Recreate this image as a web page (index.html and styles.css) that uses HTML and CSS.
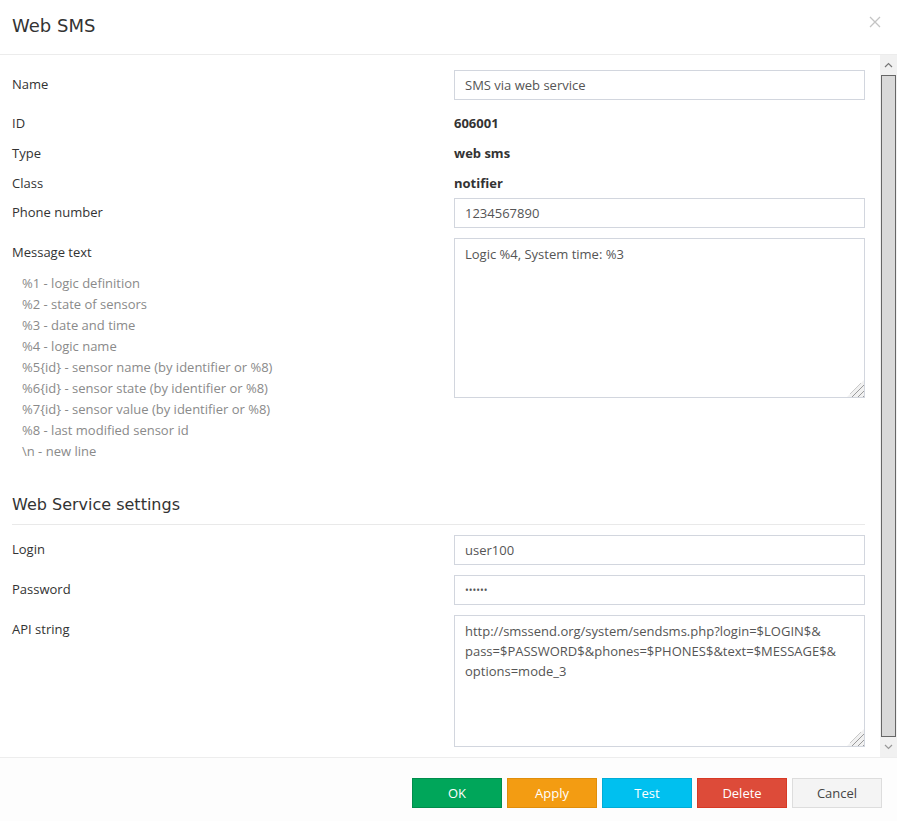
FILE: index.html
```html
<!DOCTYPE html>
<html lang="en">
<head>
  <meta charset="UTF-8">
  <meta name="viewport" content="width=device-width, initial-scale=1.0">
  <title>Web SMS</title>
  <link rel="stylesheet" href="styles.css">
</head>
<body>
  <div class="modal">
    <div class="modal-header">
      <h4 class="modal-title">Web SMS</h4>
      <button class="close" type="button" aria-label="Close">
        <svg width="12" height="12" viewBox="0 0 12 12"><path d="M1 1L11 11M11 1L1 11" stroke="#c4c4c4" stroke-width="1.3"/></svg>
      </button>
    </div>

    <div class="modal-body">
      <div class="body-content">
        <form class="form">
          <div class="form-row">
            <label class="label" for="name">Name</label>
            <input class="input" id="name" type="text" value="SMS via web service">
          </div>
          <div class="form-row static">
            <span class="label">ID</span>
            <span class="value">606001</span>
          </div>
          <div class="form-row static">
            <span class="label">Type</span>
            <span class="value">web sms</span>
          </div>
          <div class="form-row static last">
            <span class="label">Class</span>
            <span class="value">notifier</span>
          </div>
          <div class="form-row">
            <label class="label" for="phone">Phone number</label>
            <input class="input" id="phone" type="text" value="1234567890">
          </div>
          <div class="form-row">
            <div>
              <label class="label" for="message">Message text</label>
              <ul class="hints">
                <li>%1 - logic definition</li>
                <li>%2 - state of sensors</li>
                <li>%3 - date and time</li>
                <li>%4 - logic name</li>
                <li>%5{id} - sensor name (by identifier or %8)</li>
                <li>%6{id} - sensor state (by identifier or %8)</li>
                <li>%7{id} - sensor value (by identifier or %8)</li>
                <li>%8 - last modified sensor id</li>
                <li>\n - new line</li>
              </ul>
            </div>
            <div class="textarea-wrap">
              <textarea class="input textarea" id="message">Logic %4, System time: %3</textarea>
            </div>
          </div>

          <h4 class="section-title">Web Service settings</h4>

          <div class="form-row">
            <label class="label" for="login">Login</label>
            <input class="input" id="login" type="text" value="user100">
          </div>
          <div class="form-row">
            <label class="label" for="password">Password</label>
            <input class="input password" id="password" type="password" value="secret">
          </div>
          <div class="form-row">
            <label class="label" for="api">API string</label>
            <div class="textarea-wrap">
              <textarea class="input textarea api" id="api">http://smssend.org/system/sendsms.php?login=$LOGIN$&amp;
pass=$PASSWORD$&amp;phones=$PHONES$&amp;text=$MESSAGE$&amp;
options=mode_3</textarea>
            </div>
          </div>
        </form>
      </div>

      
      <div class="scrollbar">
        <div class="scroll-btn">
          <svg width="9" height="6" viewBox="0 0 9 6"><path d="M1 5L4.5 1.5L8 5" fill="none" stroke="#777" stroke-width="1.2"/></svg>
        </div>
        <div class="scroll-track">
          <div class="scroll-thumb"></div>
        </div>
        <div class="scroll-btn">
          <svg width="9" height="6" viewBox="0 0 9 6"><path d="M1 1L4.5 4.5L8 1" fill="none" stroke="#999" stroke-width="1.2"/></svg>
        </div>
      </div>
    </div>

    <div class="modal-footer">
      <button class="btn btn-ok" type="button">OK</button>
      <button class="btn btn-apply" type="button">Apply</button>
      <button class="btn btn-test" type="button">Test</button>
      <button class="btn btn-delete" type="button">Delete</button>
      <button class="btn btn-cancel" type="button">Cancel</button>
    </div>
  </div>
</body>
</html>
```

FILE: styles.css
```css
html, body {
  margin: 0;
  padding: 0;
  background: #fff;
}
body {
  font-family: "Open Sans", "Noto Sans", Arial, sans-serif;
  font-size: 13px;
  color: #333;
}
.modal {
  display: flex;
  flex-direction: column;
  width: 897px;
  height: 821px;
  overflow: hidden;
}
.modal-header {
  display: flex;
  align-items: center;
  justify-content: space-between;
  height: 54px;
  padding: 0 16px 0 12px;
  border-bottom: 1px solid #ececec;
  flex-shrink: 0;
}
.modal-title {
  margin: 0;
  font-family: "DejaVu Sans", sans-serif;
  font-size: 18px;
  font-weight: normal;
  color: #333;
  padding-bottom: 4px;
}
.close {
  background: none;
  border: none;
  padding: 0;
  margin-bottom: 11px;
  cursor: pointer;
  display: flex;
}
.modal-body {
  display: flex;
  height: 702px;
  flex-shrink: 0;
}
.body-content {
  flex: 1;
  overflow: hidden;
  padding: 15px 15px 0 12px;
}
.form-row {
  display: grid;
  grid-template-columns: 442px 1fr;
  align-items: start;
  margin-bottom: 10px;
}
.form-row.static {
  padding-top: 3px;
  margin-bottom: 7px;
  line-height: 20px;
}
.form-row.static.last {
  margin-bottom: 5px;
}
.label {
  display: block;
  line-height: 20px;
  padding-top: 4px;
}
.static .label {
  padding-top: 0;
}
.value {
  font-weight: bold;
}
.input {
  box-sizing: border-box;
  display: block;
  height: 30px;
  width: 100%;
  margin: 0;
  padding: 0 10px;
  border: 1px solid #d2d6de;
  border-radius: 0;
  font-family: inherit;
  font-size: 13px;
  color: #555;
  background: #fff;
  outline: none;
}
.input.password {
  font-size: 10px;
}
.textarea-wrap {
  position: relative;
}
/* grip in the corner, like the one the original browser draws */
.textarea-wrap::after {
  content: "";
  position: absolute;
  right: 1px;
  bottom: 1px;
  width: 17px;
  height: 17px;
  background:
    repeating-linear-gradient(135deg, transparent 0 3px, #9a9a9a 3px 4px) right bottom / 14px 14px no-repeat,
    #f1f1f1;
  clip-path: polygon(100% 0, 100% 100%, 0 100%);
  pointer-events: none;
}
.textarea {
  height: 160px;
  padding: 5px 10px;
  line-height: 20px;
  resize: none;
}
.textarea.api {
  height: 132px;
}
.hints {
  list-style: none;
  margin: 11px 0 0;
  padding: 0 0 0 10px;
  color: #8a8a8a;
  line-height: 21px;
}
.section-title {
  margin: 32px 0 10px;
  padding-bottom: 8px;
  border-bottom: 1px solid #e9e9e9;
  font-family: "DejaVu Sans", sans-serif;
  font-size: 16px;
  font-weight: normal;
  line-height: 22px;
  color: #333;
}
.scrollbar {
  width: 17px;
  display: flex;
  flex-direction: column;
  background: #f1f1f1;
}
.scroll-btn {
  height: 20px;
  display: flex;
  align-items: center;
  justify-content: center;
}
.scroll-track {
  flex: 1;
  padding: 0 1px;
}
.scroll-thumb {
  height: 100%;
  box-sizing: border-box;
  background: #d9d9d9;
  border: 1px solid #666;
}
.modal-footer {
  flex: 1;
  display: flex;
  justify-content: flex-end;
  gap: 5px;
  padding: 20px 15px 0 0;
  border-top: 1px solid #ededed;
  background: #fdfdfd;
}
.btn {
  box-sizing: border-box;
  width: 90px;
  height: 30px;
  border: 1px solid transparent;
  border-radius: 0;
  font-family: inherit;
  font-size: 13px;
  color: #fff;
  cursor: pointer;
}
.btn-ok {
  background: #00a65a;
  border-color: #008d4c;
}
.btn-apply {
  background: #f39c12;
  border-color: #e08e0b;
}
.btn-test {
  background: #00c0ef;
  border-color: #00acd6;
}
.btn-delete {
  background: #dd4b39;
  border-color: #d73925;
}
.btn-cancel {
  background: #f4f4f4;
  border-color: #ddd;
  color: #444;
}
```
